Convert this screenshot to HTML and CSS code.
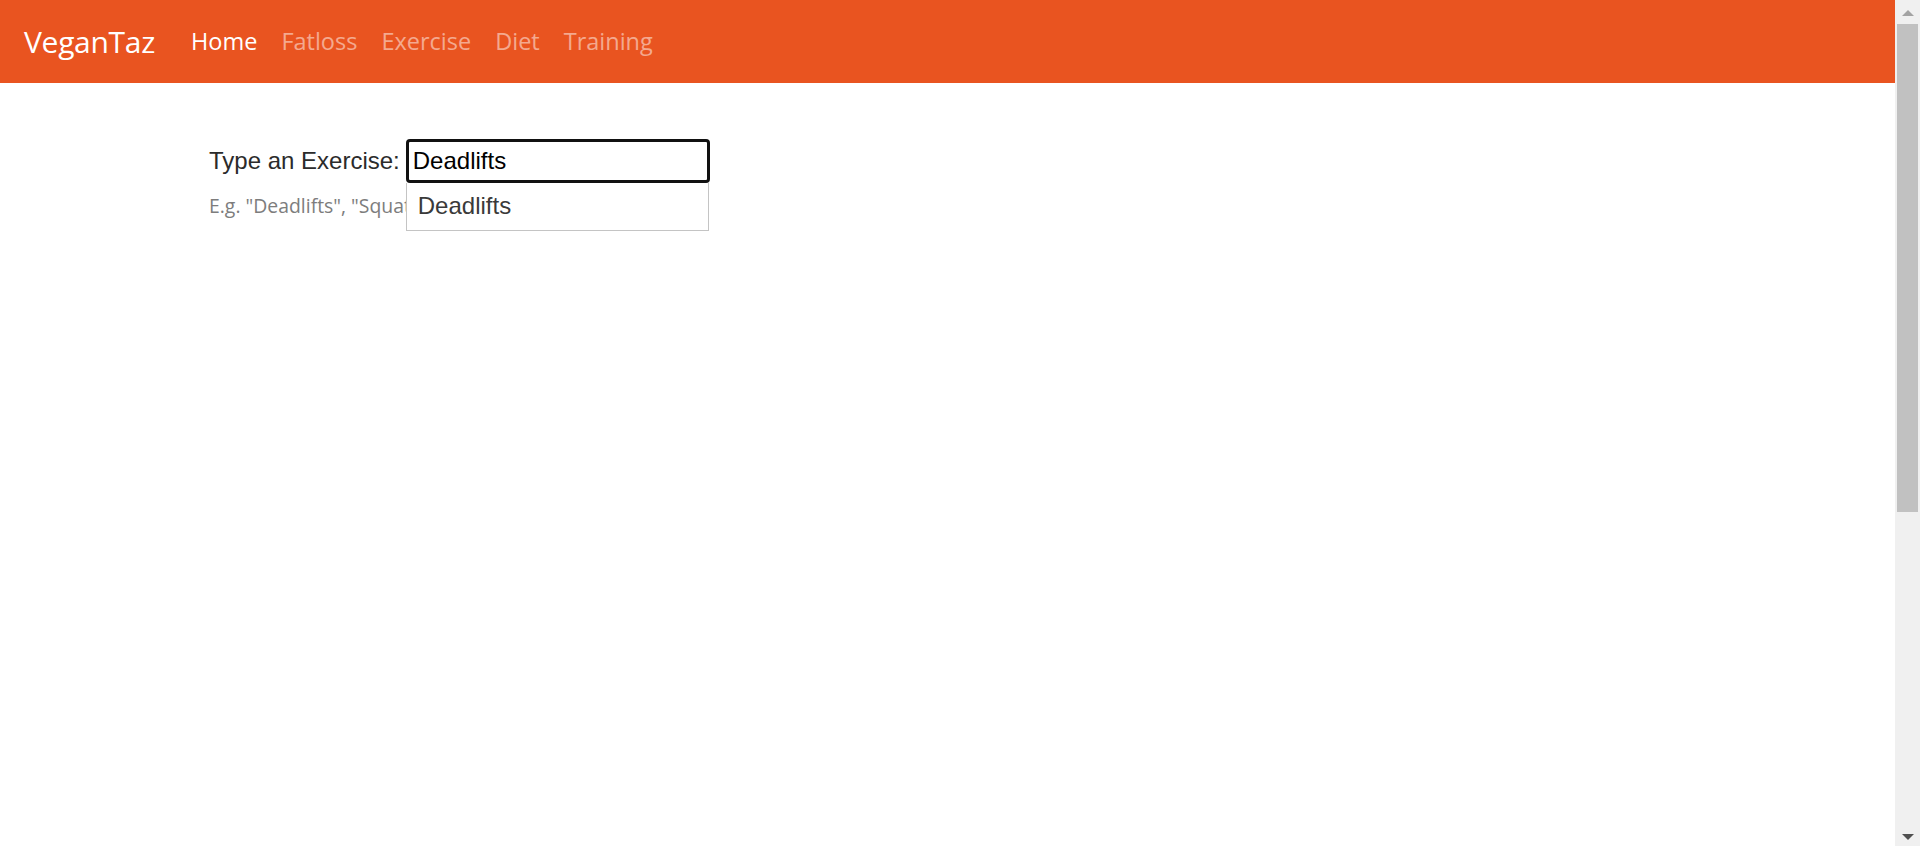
FILE: index.html
```html
<!DOCTYPE html>
<html lang="en">
<head>
<meta charset="utf-8">
<title>VeganTaz</title>
<link rel="stylesheet" href="styles.css">
</head>
<body>
<div class="page">
  <nav class="navbar">
    <a class="brand" href="#">VeganTaz</a>
    <ul class="nav">
      <li><a class="nav-link active" href="#">Home</a></li>
      <li><a class="nav-link" href="#">Fatloss</a></li>
      <li><a class="nav-link" href="#">Exercise</a></li>
      <li><a class="nav-link" href="#">Diet</a></li>
      <li><a class="nav-link" href="#">Training</a></li>
    </ul>
  </nav>
  <main class="content">
    <div class="form-row">
      <label class="label" for="ex">Type an Exercise:</label>
      <div class="combo">
        <input id="ex" class="input" type="text" value="Deadlifts">
        <ul class="suggest">
          <li class="suggest-item">Deadlifts</li>
        </ul>
      </div>
    </div>
    <p class="help">E.g. "Deadlifts", "Squats", "Bench Press"</p>
  </main>
</div>
<div class="scrollbar">
  <div class="sb-arrow sb-up"></div>
  <div class="sb-track"><div class="sb-thumb"></div></div>
  <div class="sb-arrow sb-down"></div>
</div>
</body>
</html>
```

FILE: styles.css
```css
html, body {
  margin: 0;
  padding: 0;
  overflow: hidden;
  height: 100%;
  background: #fff;
}

.page {
  margin-right: 25px;
  min-height: 100%;
}

.navbar {
  height: 83px;
  background: #e95420;
  display: flex;
  align-items: center;
  padding: 0 0 1px 24px;
  box-sizing: border-box;
  font-family: "Open Sans", "Noto Sans", sans-serif;
}

.brand {
  color: #fff;
  text-decoration: none;
  font-size: 30px;
  line-height: 45px;
  letter-spacing: -0.3px;
}

.nav {
  list-style: none;
  margin: 0 0 0 24px;
  padding: 0;
  display: flex;
}

.nav-link {
  display: block;
  padding: 0 12px;
  font-size: 23.5px;
  line-height: 36px;
  color: rgba(255, 255, 255, 0.5);
  text-decoration: none;
}

.nav-link.active {
  color: #fff;
}

.content {
  padding: 56px 0 0 209px;
}

.form-row {
  display: flex;
  align-items: center;
}

.label {
  font-family: "Liberation Sans", Arial, sans-serif;
  font-size: 24px;
  color: #2b2b2b;
  margin-right: 6px;
}

.combo {
  position: relative;
}

.input {
  display: block;
  box-sizing: border-box;
  width: 304px;
  height: 44px;
  border: 3px solid #111;
  border-radius: 4px;
  padding: 0 4px;
  margin: 0;
  font-family: "Liberation Sans", Arial, sans-serif;
  font-size: 24px;
  color: #000;
  outline: none;
  background: #fff;
}

.suggest {
  position: absolute;
  top: 100%;
  left: 0;
  width: 303px;
  box-sizing: border-box;
  margin: 0;
  padding: 0;
  list-style: none;
  background: #fff;
  border: 1px solid #c4c4c4;
  border-top: none;
}

.suggest-item {
  height: 47px;
  line-height: 46px;
  padding-left: 11px;
  font-family: "Liberation Sans", Arial, sans-serif;
  font-size: 24px;
  color: #3a3a3a;
}

.help {
  margin: 9px 0 0 0;
  font-family: "Open Sans", "Noto Sans", sans-serif;
  font-size: 19.4px;
  color: #7d7d7d;
}

.scrollbar {
  position: fixed;
  top: 0;
  right: 0;
  bottom: 0;
  width: 25px;
  background: #f0f0f0;
  display: flex;
  flex-direction: column;
}

.sb-arrow {
  height: 24px;
  display: flex;
  justify-content: center;
  align-items: center;
}

.sb-up::before {
  content: "";
  border-left: 6px solid transparent;
  border-right: 6px solid transparent;
  border-bottom: 6px solid #a3a3a3;
  margin-top: 2px;
}

.sb-down::before {
  content: "";
  border-left: 6px solid transparent;
  border-right: 6px solid transparent;
  border-top: 6px solid #505050;
  margin-bottom: -6px;
}

.sb-track {
  flex: 1;
  padding: 0 2px;
}

.sb-thumb {
  height: 488px;
  background: #c1c1c1;
}
```
